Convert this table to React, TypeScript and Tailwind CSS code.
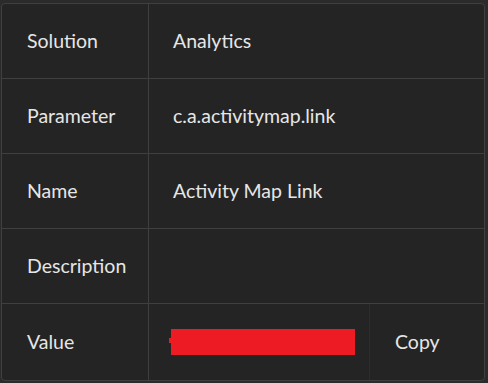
const rows = [
  { label: 'Solution', value: 'Analytics' },
  { label: 'Parameter', value: 'c.a.activitymap.link' },
  { label: 'Name', value: 'Activity Map Link' },
  { label: 'Description', value: '' },
];

export default function App() {
  return (
    <div className="h-[383px] w-[488px] bg-[#2b2b2b] pl-px pr-[3px] pt-[3px] pb-[2px] font-['Lato',sans-serif] text-[19.5px] text-[#e6e6e6]">
      <div className="flex h-full flex-col overflow-hidden rounded-[4px] border border-[#3f3f3f] bg-[#242424]">
        {rows.map(row => (
          <div key={row.label} className="flex h-[75px] border-b border-[#3f3f3f]">
            <div className="flex w-[147px] items-center border-r border-[#3f3f3f] pl-[25px]">{row.label}</div>
            <div className="flex flex-1 items-center pl-[24px]">{row.value}</div>
          </div>
        ))}
        <div className="flex flex-1">
          <div className="flex w-[147px] items-center border-r border-[#3f3f3f] pl-[25px]">Value</div>
          {/* redacted value */}
          <div className="flex flex-1 items-center pl-[20px]">
            <div className="mt-[-4px] h-[5px] w-[2px] self-center bg-[#ed1c24]" />
            <div className="h-[26px] w-[184px] bg-[#ed1c24]" />
          </div>
          <div className="flex w-[115px] items-center border-l border-[#2c2c2c] pl-[25px]">Copy</div>
        </div>
      </div>
    </div>
  );
}
